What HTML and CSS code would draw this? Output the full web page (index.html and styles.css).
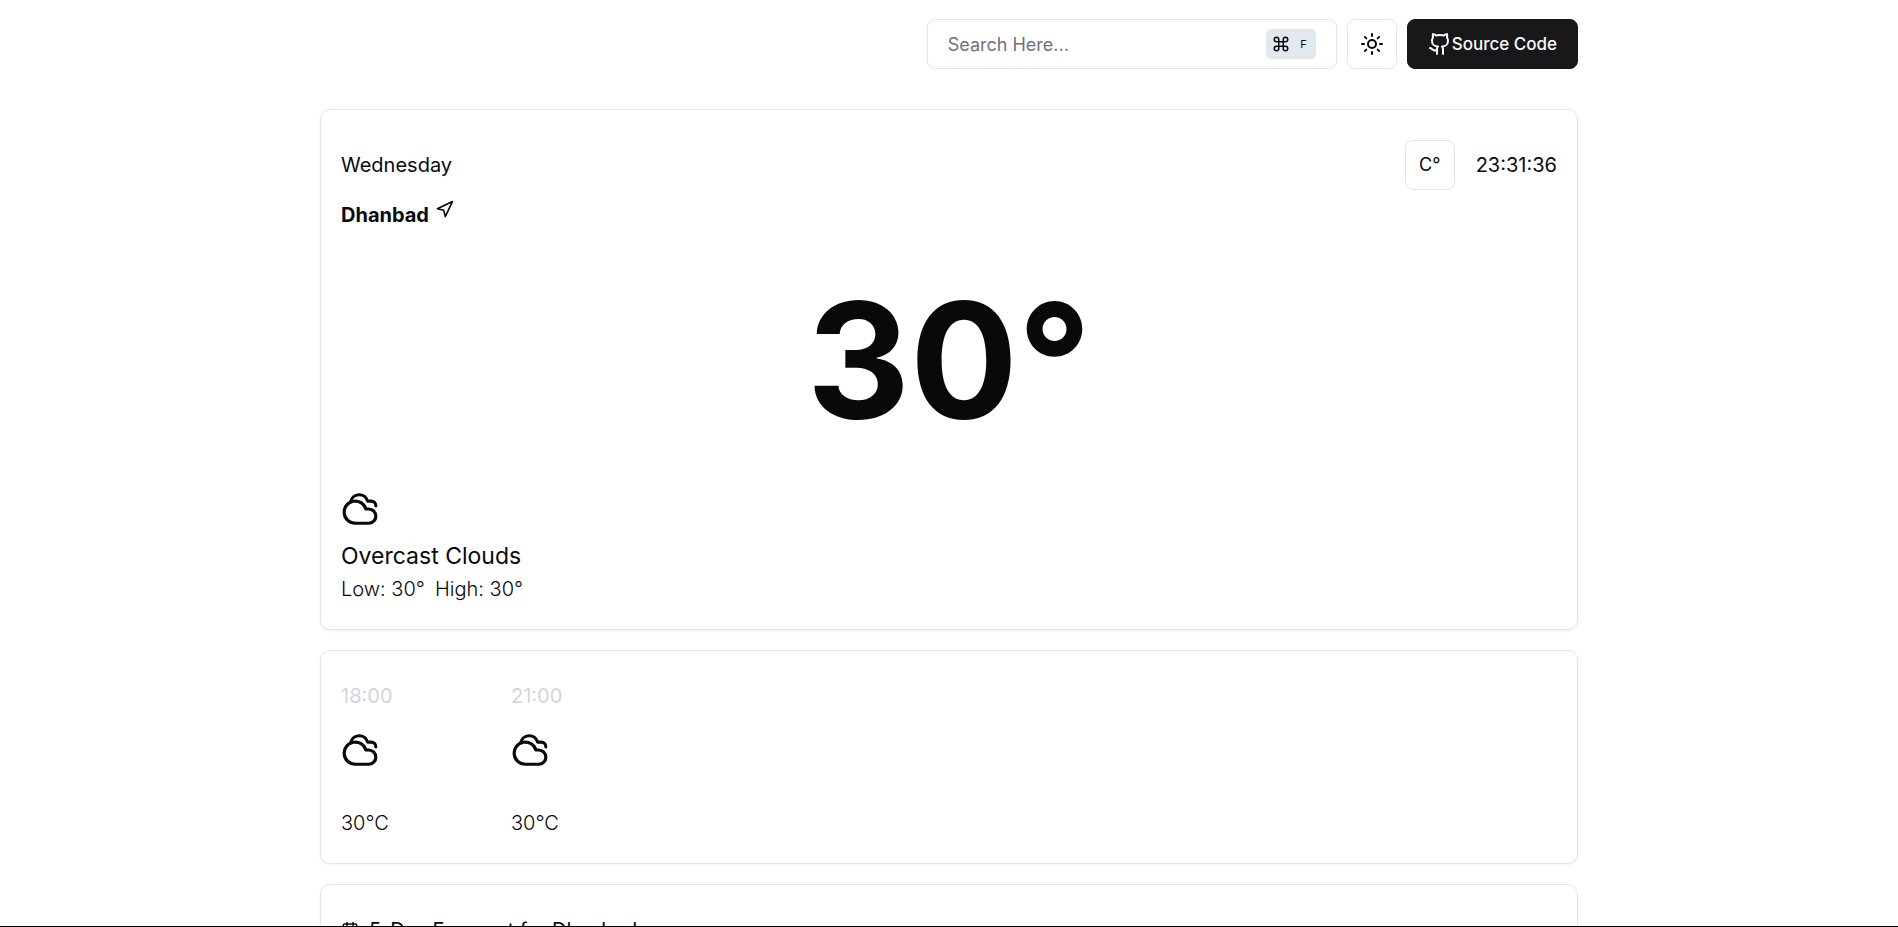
FILE: index.html
```html
<!DOCTYPE html>
<html lang="en">
<head>
<meta charset="utf-8">
<meta name="viewport" content="width=device-width, initial-scale=1">
<title>Weather</title>
<link rel="stylesheet" href="styles.css">
</head>
<body>
<svg class="sprite" aria-hidden="true">
  <symbol id="cloudy" viewBox="0 0 24 24">
    <path d="M17.5 21H9a7 7 0 1 1 6.71-9h1.79a4.5 4.5 0 1 1 0 9Z"/>
    <path d="M22 10a3 3 0 0 0-3-3h-2.207a5.502 5.502 0 0 0-10.702.5"/>
  </symbol>
</svg>
<div class="screen">
  <div class="container">
    <header class="header">
      <div class="search">
        <input class="search-input" type="text" placeholder="Search Here..." aria-label="Search">
        <kbd class="shortcut">
          <svg class="icon icon-sm" viewBox="0 0 24 24"><path d="M15 6v12a3 3 0 1 0 3-3H6a3 3 0 1 0 3 3V6a3 3 0 1 0-3 3h12a3 3 0 1 0-3-3"/></svg>
          <span>F</span>
        </kbd>
      </div>
      <button class="button button-square" type="button" aria-label="Toggle theme">
        <svg class="icon icon-md" viewBox="0 0 24 24"><circle cx="12" cy="12" r="4"/><path d="M12 2v2M12 20v2M4.93 4.93l1.41 1.41M17.66 17.66l1.41 1.41M2 12h2M20 12h2M6.34 17.66l-1.41 1.41M19.07 4.93l-1.41 1.41"/></svg>
      </button>
      <a class="button button-dark" href="#">
        <svg class="icon icon-md" viewBox="0 0 24 24"><path d="M15 22v-4a4.8 4.8 0 0 0-1-3.5c3 0 6-2 6-5.5.08-1.25-.27-2.48-1-3.5.28-1.15.28-2.35 0-3.5 0 0-1 0-3 1.5-2.64-.5-5.36-.5-8 0C6 2 5 2 5 2c-.3 1.15-.3 2.35 0 3.5A5.403 5.403 0 0 0 4 9c0 3.500 3 5.500 6 5.500-.39.49-.68 1.050-.85 1.650-.17.6-.22 1.230-.15 1.850v4"/><path d="M9 18c-4.51 2-5-2-7-2"/></svg>
        Source Code
      </a>
    </header>
    <main class="cards">
      <section class="card">
        <div class="row">
          <span>Wednesday</span>
          <div class="clock">
            <button class="button button-square" type="button">C°</button>
            <time>23:31:36</time>
          </div>
        </div>
        <h1 class="city">Dhanbad
          <svg class="icon icon-nav" viewBox="0 0 24 24"><path d="M3 11 22 2l-9 19-2-8-8-2z"/></svg>
        </h1>
        <p class="temperature">30°</p>
        <svg class="icon icon-lg"><use href="#cloudy"/></svg>
        <p class="condition">Overcast Clouds</p>
        <p class="range"><span>Low: 30°</span><span>High: 30°</span></p>
      </section>
      <section class="card hours">
        <div class="hour">
          <time class="hour-time">18:00</time>
          <svg class="icon icon-lg"><use href="#cloudy"/></svg>
          <span class="hour-temp">30°C</span>
        </div>
        <div class="hour">
          <time class="hour-time">21:00</time>
          <svg class="icon icon-lg"><use href="#cloudy"/></svg>
          <span class="hour-temp">30°C</span>
        </div>
      </section>
      <section class="card">
        <h2 class="forecast-title">
          <svg class="icon icon-sm" viewBox="0 0 24 24"><rect x="3" y="4" width="18" height="18" rx="2"/><path d="M16 2v4M8 2v4M3 10h18"/></svg>
          5-Day Forecast for Dhanbad
        </h2>
      </section>
    </main>
  </div>
</div>
</body>
</html>
```
FILE: styles.css
```css
* {
  box-sizing: border-box;
}

body {
  margin: 0;
  background: #fff;
  color: #09090b;
  font-family: Inter, "Liberation Sans", sans-serif;
  font-size: 20px;
  line-height: 30px;
}

h1, h2, p {
  margin: 0;
  font-size: 20px;
  font-weight: 400;
}

.sprite {
  display: none;
}

.screen {
  height: 100vh;
  overflow: hidden;
  border-bottom: 1px solid #000;
}

.container {
  max-width: 1298px;
  margin: 0 auto;
  padding: 19px 20px;
}

.header {
  display: flex;
  justify-content: flex-end;
  gap: 10px;
  margin-bottom: 40px;
}

.icon {
  flex: none;
  display: block;
  fill: none;
  stroke: currentColor;
  stroke-width: 2;
  stroke-linecap: round;
  stroke-linejoin: round;
}

.icon-sm {
  width: 18px;
  height: 18px;
}

.icon-md {
  width: 24px;
  height: 24px;
}

.icon-lg {
  width: 38px;
  height: 38px;
}

.icon-nav {
  width: 19px;
  height: 19px;
}

.search {
  display: flex;
  align-items: center;
  width: 410px;
  height: 50px;
  padding: 0 20px;
  border: 1px solid #e4e4e7;
  border-radius: 8px;
}

.search-input {
  flex: 1;
  min-width: 0;
  padding: 2px 0 0;
  border: 0;
  outline: 0;
  background: none;
  color: inherit;
  font: inherit;
  font-size: 18px;
}

.search-input::placeholder {
  color: #71717a;
  opacity: 1;
}

.shortcut {
  display: flex;
  align-items: center;
  gap: 10px;
  height: 30px;
  padding: 0 9px 0 6px;
  border-radius: 5px;
  background: #e2e8f0;
  font-family: inherit;
  font-size: 11px;
}

.button {
  display: flex;
  align-items: center;
  justify-content: center;
  height: 50px;
  padding: 0;
  border: 1px solid #e4e4e7;
  border-radius: 8px;
  background: #fff;
  color: inherit;
  font: inherit;
  font-size: 18px;
  text-decoration: none;
}

.button-square {
  width: 50px;
}

.button-dark {
  padding: 0 20px;
  border-color: #18181b;
  background: #18181b;
  color: #fafafa;
  font-size: 17px;
  font-weight: 500;
}

.cards {
  display: grid;
  gap: 20px;
}

.card {
  padding: 30px 20px 25px;
  border: 1px solid #e4e4e7;
  border-radius: 10px;
  box-shadow: 0 1px 3px rgba(0, 0, 0, 0.06);
}

.row {
  display: flex;
  align-items: center;
  justify-content: space-between;
  margin-bottom: 10px;
}

.clock {
  display: flex;
  align-items: center;
  gap: 21px;
}

.city {
  display: flex;
  gap: 6px;
  font-weight: 700;
}

.temperature {
  margin: 50px 0;
  font-size: 160px;
  font-weight: 700;
  line-height: 1;
  text-align: center;
}

.condition {
  margin-top: 11px;
  font-size: 23px;
  line-height: 35px;
}

.range {
  display: flex;
  gap: 10px;
  font-weight: 300;
}

.hours {
  display: flex;
  gap: 20px;
}

.hour {
  display: flex;
  flex-direction: column;
  gap: 20px;
  width: 150px;
}

.hour-time {
  color: #d1d5db;
}

.hour-temp {
  margin-top: 19px;
  font-weight: 300;
}

.forecast-title {
  display: flex;
  align-items: center;
  gap: 10px;
}
```
